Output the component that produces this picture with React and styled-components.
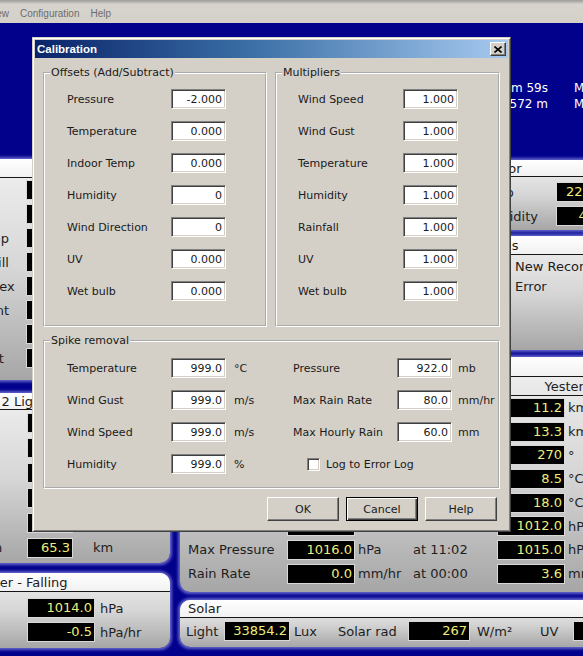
import React from "react";
import styled, { createGlobalStyle, css } from "styled-components";

const GlobalStyle = createGlobalStyle`
  html, body {
    margin: 0;
    padding: 0;
  }
  body {
    width: 583px;
    height: 656px;
    overflow: hidden;
    background: #01018c;
  }
  * {
    box-sizing: border-box;
  }
`;

const Window = styled.div`
  width: 583px;
  height: 656px;
  overflow: hidden;
  display: flex;
  flex-direction: column;
  font-family: "DejaVu Sans", Verdana, sans-serif;
`;

const MenuBar = styled.nav`
  height: 23px;
  flex: none;
  display: flex;
  align-items: center;
  padding-top: 3px;
  background: linear-gradient(180deg, #9c9c9c 0px, #c4c1bb 3px, #d7d4cf 4px, #d4d0c8 100%);
  font: 10px "Liberation Sans", Arial, sans-serif;
  color: #6c6c6c;
`;

const MenuItem = styled.span`
  padding: 0 5.5px;
  white-space: nowrap;
  ${(p) => p.$first && css`margin-left: -18px;`}
`;

const Desktop = styled.main`
  flex: 1;
  position: relative;
  background: #01018c;
`;

const InfoStrip = styled.div`
  height: 136px;
  display: flex;
  padding-top: 57px;
  color: #ffffff;
  font-size: 12px;
  line-height: 16px;
  white-space: nowrap;
`;

const InfoCol = styled.div`
  width: ${(p) => p.$w}px;
  margin-left: ${(p) => p.$ml}px;
  text-align: ${(p) => p.$align || "left"};
  flex: none;
`;

const Board = styled.div`
  display: grid;
  grid-template-columns: 234px 516px;
  column-gap: 10px;
  margin-left: -64px;
  align-items: start;
`;

const Column = styled.div`
  display: flex;
  flex-direction: column;
`;

const Panel = styled.section`
  height: ${(p) => p.$h}px;
  margin-top: ${(p) => p.$mt || 0}px;
  border-radius: 10px;
  overflow: hidden;
  display: flex;
  flex-direction: column;
  background: linear-gradient(180deg, #f0f0f0 0%, #d6d6d6 50%, #a6a6a6 100%);
  box-shadow: 0 0 3px 2px rgba(118, 118, 214, 0.85);
  flex: none;
`;

const PanelHead = styled.header`
  height: ${(p) => p.$h}px;
  flex: none;
  display: flex;
  align-items: center;
  padding-left: ${(p) => (p.$pad === undefined ? 8 : p.$pad)}px;
  background: linear-gradient(180deg, #ffffff, #f1f1f1);
  border-bottom: 1px solid #161616;
  font-size: 13px;
  color: #1c1c1c;
  white-space: nowrap;
`;

const Rows = styled.div`
  display: grid;
  grid-template-columns: ${(p) => p.$cols};
  grid-auto-rows: ${(p) => p.$rh}px;
  align-items: center;
  padding: ${(p) => p.$pad};
  font-size: 13px;
  color: #1e1e1e;
  white-space: nowrap;
`;

const Label = styled.span`
  white-space: nowrap;
`;

const Value = styled.div`
  height: 20px;
  width: ${(p) => (p.$w ? `${p.$w}px` : "auto")};
  flex: none;
  background: #000;
  color: #eeee7c;
  border: 1px solid #d8d8d8;
  text-align: right;
  padding-right: 2px;
  line-height: 18px;
  font-size: 13px;
  overflow: hidden;
  white-space: nowrap;
`;

const Unit = styled.span`
  padding-left: ${(p) => (p.$pad === undefined ? 3 : p.$pad)}px;
  white-space: nowrap;
  ${(p) => p.$w && css`width: ${p.$w}px; flex: none;`}
`;

const SideColumn = styled.div`
  width: 200px;
  display: flex;
  flex-direction: column;
`;

const TopRow = styled.div`
  height: 191px;
  display: flex;
  padding-left: 292px;
`;

const AlarmList = styled.ul`
  list-style: none;
  margin: 0;
  padding: 2px 0 0 43px;
  font-size: 13px;
  color: #1e1e1e;
  li {
    height: 20px;
    line-height: 20px;
    white-space: nowrap;
  }
`;

const SubHead = styled.div`
  height: 19px;
  flex: none;
  display: grid;
  grid-template-columns: 107px 68px 58px 84px 68px 84px;
  align-items: center;
  border-bottom: 1px solid #161616;
  font-size: 13px;
  color: #1e1e1e;
  span {
    text-align: center;
  }
  span:first-child {
    grid-column: 2 / span 2;
  }
  span:last-child {
    grid-column: 5 / span 2;
    padding-left: 6px;
  }
`;

const SolarRow = styled.div`
  height: 26px;
  display: flex;
  align-items: center;
  padding-left: 6px;
  font-size: 13px;
  color: #1e1e1e;
  white-space: nowrap;
`;

const SolarLabel = styled.span`
  width: ${(p) => p.$w}px;
  flex: none;
`;

/* ---------- dialog ---------- */

const Dialog = styled.div`
  position: absolute;
  left: 32px;
  top: 14px;
  width: 479px;
  padding: 2px;
  background: #d4d0c8;
  border: 1px solid;
  border-color: #d4d0c8 #404040 #404040 #d4d0c8;
  box-shadow: inset 1px 1px #ffffff, inset -1px -1px #808080;
  font-family: "DejaVu Sans", Verdana, sans-serif;
  font-size: 11px;
  color: #1a1a1a;
`;

const TitleBar = styled.div`
  height: 18px;
  display: flex;
  align-items: center;
  justify-content: space-between;
  padding: 0 2px;
  background: linear-gradient(90deg, #0a246a 0%, #3a6ea5 45%, #a6caf0 100%);
`;

const Title = styled.span`
  font: bold 11.5px "Liberation Sans", Arial, sans-serif;
  color: #ffffff;
`;

const CloseButton = styled.button`
  width: 16px;
  height: 14px;
  padding: 0;
  display: flex;
  align-items: center;
  justify-content: center;
  background: #d4d0c8;
  border: 1px solid;
  border-color: #ffffff #404040 #404040 #ffffff;
  box-shadow: inset -1px -1px #808080;
`;

const DialogBody = styled.div`
  padding: 8px 8px 8px 8px;
`;

const TopGroups = styled.div`
  display: grid;
  grid-template-columns: 224px 225px;
  column-gap: 8px;
`;

const GroupBox = styled.fieldset`
  margin: ${(p) => p.$mt || 0}px 0 0 0;
  padding: 0;
  min-width: 0;
  border: 2px groove #ffffff;
`;

const Legend = styled.legend`
  margin-left: 5px;
  padding: 0 1px;
  font-size: 11px;
  line-height: 13px;
`;

const FieldRows = styled.div`
  display: grid;
  grid-template-columns: ${(p) => p.$cols};
  grid-auto-rows: 32px;
  align-items: center;
  padding: ${(p) => p.$pad};
  white-space: nowrap;
`;

const NumberBox = styled.input`
  width: 55px;
  height: 20px;
  margin: 0;
  padding: 0 3px 0 0;
  text-align: right;
  font: 11px "DejaVu Sans", Verdana, sans-serif;
  color: #1a1a1a;
  background: #ffffff;
  border: 1px solid;
  border-color: #808080 #ffffff #ffffff #808080;
  box-shadow: inset 1px 1px #404040, inset -1px -1px #d4d0c8;
  outline: none;
`;

const DialogUnit = styled.span`
  padding-left: ${(p) => p.$pad}px;
`;

const CheckLine = styled.label`
  grid-column: 4 / span 3;
  display: flex;
  align-items: center;
  gap: 6px;
  padding-left: 14px;
`;

const CheckBox = styled.span`
  width: 13px;
  height: 13px;
  background: #ffffff;
  border: 1px solid;
  border-color: #808080 #ffffff #ffffff #808080;
  box-shadow: inset 1px 1px #404040, inset -1px -1px #d4d0c8;
`;

const ButtonRow = styled.div`
  display: flex;
  justify-content: flex-end;
  gap: 7px;
  margin-top: 8px;
  padding-right: 3px;
`;

const PushButton = styled.button`
  width: 72px;
  height: 24px;
  padding: 0;
  font: 11px "DejaVu Sans", Verdana, sans-serif;
  color: #1a1a1a;
  background: #d4d0c8;
  border: 1px solid;
  border-color: #ffffff #404040 #404040 #ffffff;
  box-shadow: inset -1px -1px #808080;
  ${(p) =>
    p.$default &&
    css`
      border: 1px solid #000000;
      box-shadow: inset 1px 1px #ffffff, inset -1px -1px #404040, inset -2px -2px #808080;
    `}
`;

/* ---------- data ---------- */

const outdoorRows = [
  ["Temp", "14.2"],
  ["Gust", "22.5"],
  ["Max temp", "18.0"],
  ["Wind Chill", "14.2"],
  ["Heat Index", "14.2"],
  ["Dew Point", "9.1"],
  ["Rain", "0.0"],
  ["Apparent", "12.9"],
];

const lightningRows = [
  ["Strikes", "0", ""],
  ["Today", "0", ""],
  ["Hour", "0", ""],
  ["Last", "--", ""],
  ["Time", "--:--", ""],
  ["Dist. min", "65.3", "km"],
];

const todayRows = [
  ["High Gust", "14.5", "km/h", "at 13:20", "11.2", "km/h"],
  ["High Speed", "9.7", "km/h", "at 13:18", "13.3", "km/h"],
  ["Dominant Dir", "265", "°", "", "270", "°"],
  ["Low Temp", "9.4", "°C", "at 06:12", "8.5", "°C"],
  ["High Temp", "18.0", "°C", "at 14:40", "18.0", "°C"],
  ["Min Pressure", "1013.0", "hPa", "at 02:15", "1012.0", "hPa"],
  ["Max Pressure", "1016.0", "hPa", "at 11:02", "1015.0", "hPa"],
  ["Rain Rate", "0.0", "mm/hr", "at 00:00", "3.6", "mm/hr"],
];

const offsets = [
  ["Pressure", "-2.000"],
  ["Temperature", "0.000"],
  ["Indoor Temp", "0.000"],
  ["Humidity", "0"],
  ["Wind Direction", "0"],
  ["UV", "0.000"],
  ["Wet bulb", "0.000"],
];

const multipliers = [
  ["Wind Speed", "1.000"],
  ["Wind Gust", "1.000"],
  ["Temperature", "1.000"],
  ["Humidity", "1.000"],
  ["Rainfall", "1.000"],
  ["UV", "1.000"],
  ["Wet bulb", "1.000"],
];

const spikes = [
  ["Temperature", "999.0", "°C", "Pressure", "922.0", "mb"],
  ["Wind Gust", "999.0", "m/s", "Max Rain Rate", "80.0", "mm/hr"],
  ["Wind Speed", "999.0", "m/s", "Max Hourly Rain", "60.0", "mm"],
];

const CalibrationDialog = () => (
  <Dialog>
    <TitleBar>
      <Title>Calibration</Title>
      <CloseButton aria-label="Close">
        <svg width="8" height="7" viewBox="0 0 8 7">
          <path d="M0.5 0.5 L7.5 6.5 M7.5 0.5 L0.5 6.5" stroke="#000" strokeWidth="1.6" />
        </svg>
      </CloseButton>
    </TitleBar>
    <DialogBody>
      <TopGroups>
        <GroupBox>
          <Legend>Offsets (Add/Subtract)</Legend>
          <FieldRows $cols="104px 55px" $pad="4px 0 18px 22px">
            {offsets.map(([name, val]) => (
              <React.Fragment key={name}>
                <Label>{name}</Label>
                <NumberBox readOnly value={val} />
              </React.Fragment>
            ))}
          </FieldRows>
        </GroupBox>
        <GroupBox>
          <Legend>Multipliers</Legend>
          <FieldRows $cols="105px 55px" $pad="4px 0 18px 21px">
            {multipliers.map(([name, val]) => (
              <React.Fragment key={name}>
                <Label>{name}</Label>
                <NumberBox readOnly value={val} />
              </React.Fragment>
            ))}
          </FieldRows>
        </GroupBox>
      </TopGroups>

      <GroupBox $mt={7}>
        <Legend>Spike removal</Legend>
        <FieldRows $cols="104px 55px 67px 104px 55px auto" $pad="5px 0 7px 22px">
          {spikes.map(([a, av, au, b, bv, bu]) => (
            <React.Fragment key={a}>
              <Label>{a}</Label>
              <NumberBox readOnly value={av} />
              <DialogUnit $pad={8}>{au}</DialogUnit>
              <Label>{b}</Label>
              <NumberBox readOnly value={bv} />
              <DialogUnit $pad={6}>{bu}</DialogUnit>
            </React.Fragment>
          ))}
          <Label>Humidity</Label>
          <NumberBox readOnly value="999.0" />
          <DialogUnit $pad={8}>%</DialogUnit>
          <CheckLine>
            <CheckBox />
            Log to Error Log
          </CheckLine>
        </FieldRows>
      </GroupBox>

      <ButtonRow>
        <PushButton>OK</PushButton>
        <PushButton $default>Cancel</PushButton>
        <PushButton>Help</PushButton>
      </ButtonRow>
    </DialogBody>
  </Dialog>
);

export default function App() {
  return (
    <>
      <GlobalStyle />
      <Window>
        <MenuBar>
          <MenuItem $first>View</MenuItem>
          <MenuItem>Configuration</MenuItem>
          <MenuItem>Help</MenuItem>
        </MenuBar>

        <Desktop>
          <InfoStrip>
            <InfoCol $w={300} $ml={248} $align="right">
              <div>Uptime 2d 7h 14m 59s</div>
              <div>Cloud base 1572 m</div>
            </InfoCol>
            <InfoCol $w={120} $ml={26}>
              <div>Moonrise 21:14</div>
              <div>Moonset 08:02</div>
            </InfoCol>
          </InfoStrip>

          <Board>
            <Column>
              <Panel $h={221}>
                <PanelHead $h={19}>Outdoor</PanelHead>
                <Rows $cols="82px 46px 1fr" $rh={24} $pad="0 0 0 8px">
                  {outdoorRows.map(([name, val]) => (
                    <React.Fragment key={name}>
                      <Label>{name}</Label>
                      <Value>{val}</Value>
                      <span />
                    </React.Fragment>
                  ))}
                </Rows>
              </Panel>

              <Panel $h={170} $mt={13}>
                <PanelHead $h={17}>Channel 2 Lightning</PanelHead>
                <Rows $cols="83px 46px 1fr" $rh={25} $pad="0 0 0 8px">
                  {lightningRows.map(([name, val, unit]) => (
                    <React.Fragment key={name}>
                      <Label>{name}</Label>
                      <Value>{val}</Value>
                      <Unit $pad={20}>{unit}</Unit>
                    </React.Fragment>
                  ))}
                </Rows>
              </Panel>

              <Panel $h={75} $mt={10}>
                <PanelHead $h={19}>Barometer - Falling</PanelHead>
                <Rows $cols="83px 68px 1fr" $rh={24} $pad="4px 0 0 8px">
                  <Label>Now</Label>
                  <Value>1014.0</Value>
                  <Unit $pad={5}>hPa</Unit>
                  <Label>Trend</Label>
                  <Value>-0.5</Value>
                  <Unit $pad={5}>hPa/hr</Unit>
                </Rows>
              </Panel>
            </Column>

            <Column>
              <TopRow>
                <SideColumn>
                  <Panel $h={70} $mt={1}>
                    <PanelHead $h={17}>Indoor</PanelHead>
                    <Rows $cols="77px 42px" $rh={24} $pad="3px 0 0 7px">
                      <Label>Temp</Label>
                      <Value>22.4</Value>
                      <Label>Humidity</Label>
                      <Value>45</Value>
                    </Rows>
                  </Panel>
                  <Panel $h={114} $mt={6}>
                    <PanelHead $h={19} $pad={5}>Status</PanelHead>
                    <AlarmList>
                      <li>New Record</li>
                      <li>Error</li>
                    </AlarmList>
                  </Panel>
                </SideColumn>
              </TopRow>

              <Panel $h={235} $mt={7}>
                <PanelHead $h={20}>Today and Yesterday</PanelHead>
                <SubHead>
                  <span>Today</span>
                  <span>Yesterday</span>
                </SubHead>
                <Rows $cols="99px 68px 58px 84px 68px 1fr" $rh={23.7} $pad="0 0 0 8px">
                  {todayRows.map(([name, v1, u1, at, v2, u2]) => (
                    <React.Fragment key={name}>
                      <Label>{name}</Label>
                      <Value>{v1}</Value>
                      <Unit>{u1}</Unit>
                      <Label>{at}</Label>
                      <Value>{v2}</Value>
                      <Unit>{u2}</Unit>
                    </React.Fragment>
                  ))}
                </Rows>
              </Panel>

              <Panel $h={47} $mt={8}>
                <PanelHead $h={18}>Solar</PanelHead>
                <SolarRow>
                  <SolarLabel $w={38}>Light</SolarLabel>
                  <Value $w={66}>33854.2</Value>
                  <Unit $w={48} $pad={4}>Lux</Unit>
                  <SolarLabel $w={70}>Solar rad</SolarLabel>
                  <Value $w={62}>267</Value>
                  <Unit $w={70} $pad={7}>W/m²</Unit>
                  <SolarLabel $w={33}>UV</SolarLabel>
                  <Value $w={60}>4</Value>
                </SolarRow>
              </Panel>
            </Column>
          </Board>

          <CalibrationDialog />
        </Desktop>
      </Window>
    </>
  );
}
